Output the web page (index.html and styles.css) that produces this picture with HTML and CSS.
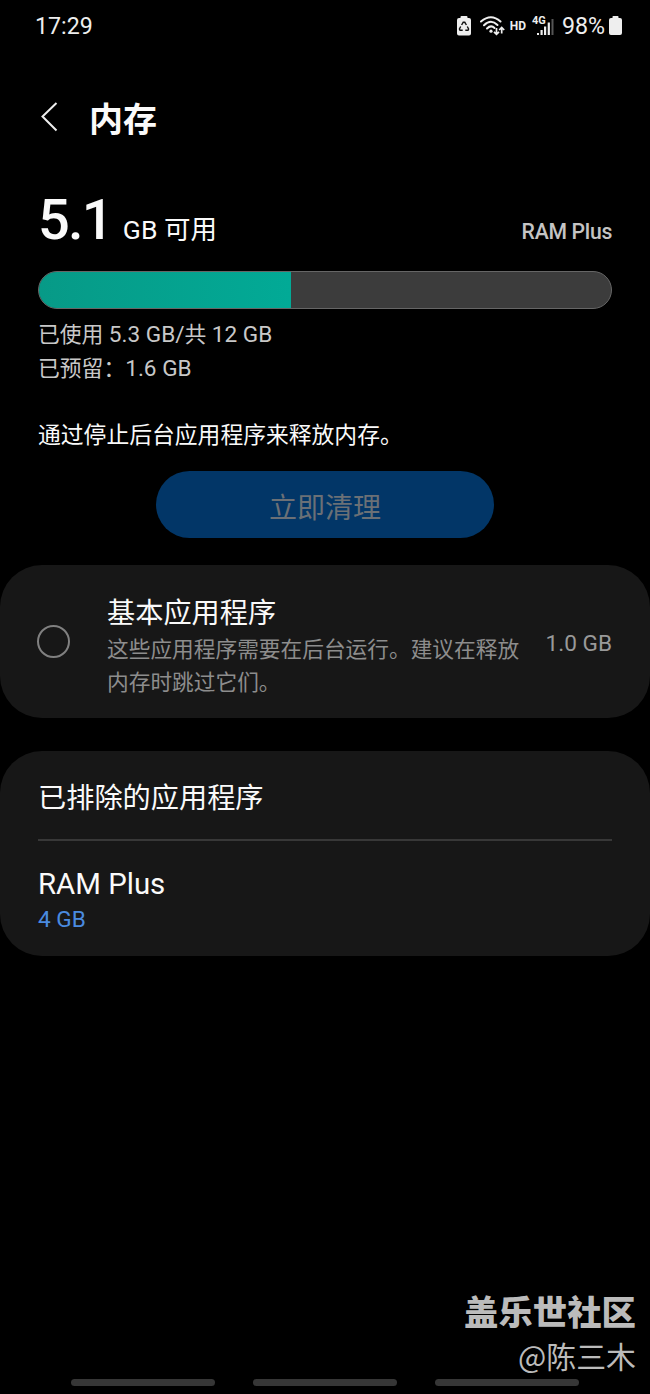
FILE: index.html
```html
<!DOCTYPE html>
<html lang="zh-CN">
<head>
  <meta charset="UTF-8" />
  <meta name="viewport" content="width=device-width, initial-scale=1.0"/>
  <title>内存</title>
  <link rel="stylesheet" href="styles.css">
</head>
<body>
  <div class="status-bar">
    <span class="time">17:29</span>
    <div class="status-icons">
      <svg class="icon-saver" width="14" height="20" viewBox="0 0 14 20">
        <path d="M3.500 2V1Q3.500 0 4.500 0H9.500Q10.500 0 10.500 1V2H12Q14 2 14 4V17.500Q14 19.500 12 19.500H2Q0 19.500 0 17.500V4Q0 2 2 2Z" fill="#eee"/>
        <path d="M4.600 9L6.200 6.300H7.800L9.400 9M10.300 10.500L11.600 13L11 14.200H8.300M5.700 14.200H3L2.400 13L3.700 10.500" fill="none" stroke="#111" stroke-width="1.400"/>
      </svg>
      <svg class="icon-wifi" width="26" height="20" viewBox="0 0 26 20">
        <g fill="none" stroke="#eee" stroke-width="2" stroke-linecap="round">
          <path d="M1 5.500Q11 -3 20.500 5.500"/>
          <path d="M4 9.200Q11 2.500 17.500 9"/>
          <path d="M7 12.500Q11 8.500 14.500 12"/>
        </g>
        <circle cx="11" cy="15.200" r="1.600" fill="#eee"/>
        <path d="M16.500 12V18.300M14 15.800L16.500 18.300L19 15.800M21.700 17.500V11.500M19.200 14L21.700 11.500L24.200 14" fill="none" stroke="#eee" stroke-width="1.700"/>
      </svg>
      <span class="hd">HD</span>
      <div class="signal">
        <svg width="24" height="20" viewBox="0 0 24 20">
          <path d="M5 17h2v2h-2zM8.500 14h2.200v5h-2.200zM12 10.500h2.200v8.500h-2.200zM15.700 6.500h2.200v12.500h-2.200z" fill="#eee"/>
          <path d="M19.500 3h2v16h-2z" fill="#555"/>
        </svg>
        <span class="net">4G</span>
      </div>
      <span class="percent">98%</span>
      <svg class="icon-battery" width="13" height="20" viewBox="0 0 13 20">
        <path d="M3.500 2V.8Q3.500 0 4.300 0H8.700Q9.500 0 9.500 .8V2H11Q13 2 13 4V17Q13 19 11 19H2Q0 19 0 17V4Q0 2 2 2Z" fill="#eee"/>
      </svg>
    </div>
  </div>

  <header class="header">
    <svg class="back" width="18" height="32" viewBox="0 0 18 32">
      <path d="M16.500 2L2.500 15.500L16.500 29.500" fill="none" stroke="#eee" stroke-width="2"/>
    </svg>
    <h1>内存</h1>
  </header>

  <section class="memory">
    <div class="summary">
      <div class="free"><span class="num">5.1</span><span class="unit">GB 可用</span></div>
      <span class="ram-label">RAM Plus</span>
    </div>
    <div class="bar"><div class="used" style="width: 44%"></div></div>
    <p class="detail">已使用 <span>5.3 GB/</span>共 <span>12 GB</span></p>
    <p class="detail">已预留：<span>1.6 GB</span></p>
    <p class="hint">通过停止后台应用程序来释放内存。</p>
    <button class="clean" disabled>立即清理</button>
  </section>

  <section class="card basic">
    <span class="radio"></span>
    <div class="basic-text">
      <h2>基本应用程序</h2>
      <p>这些应用程序需要在后台运行。建议在释放内存时跳过它们。</p>
    </div>
    <span class="size">1.0 GB</span>
  </section>

  <section class="card options">
    <h2 class="excluded">已排除的应用程序</h2>
    <div class="ram-plus">
      <h2>RAM Plus</h2>
      <p>4 GB</p>
    </div>
  </section>

  <nav class="gestures">
    <span></span>
    <span></span>
    <span></span>
  </nav>

  <div class="watermark">
    <strong>盖乐世社区</strong>
    <span>@陈三木</span>
  </div>
</body>
</html>
```
FILE: styles.css
```css
* { box-sizing: border-box; }
body { margin: 0; height: 1394px; display: flex; flex-direction: column; position: relative; overflow: hidden; background: #000; color: #fafafa; font-family: Roboto, "Noto Sans CJK SC", sans-serif; }
h1, h2, p { margin: 0; font-weight: 400; white-space: nowrap; }
svg { display: block; }

.status-bar { height: 52px; padding: 0 28px 0 35px; display: flex; align-items: center; justify-content: space-between; color: #eee; }
.time { font-size: 23.2px; line-height: 28px; }
.status-icons { display: flex; align-items: center; }
.icon-wifi { margin-left: 9px; }
.hd { margin-left: 4px; font-size: 12px; font-weight: 700; }
.signal { position: relative; margin-left: 6px; }
.net { position: absolute; left: 0; top: -1px; font-size: 11px; line-height: 12px; font-weight: 700; }
.percent { margin-left: 6px; font-size: 23.2px; line-height: 28px; }
.icon-battery { margin-left: 4px; }

.header { height: 130px; padding: 0 40px; display: flex; align-items: center; gap: 31px; }
.header h1 { padding-top: 6px; font-size: 34px; line-height: 48px; font-weight: 700; }

.memory { height: 383px; padding: 0 38px; display: flex; flex-direction: column; }
.summary { height: 89px; display: flex; justify-content: space-between; align-items: baseline; }
.num { font-size: 56px; line-height: 76px; font-weight: 500; letter-spacing: -1.8px; }
.unit { margin-left: 11px; font-size: 26.5px; }
.ram-label { font-size: 21.2px; font-weight: 500; letter-spacing: -0.3px; color: #c4c4c4; }
.bar { flex: none; height: 38px; border: 1px solid #666; border-radius: 19px; background: #3c3c3c; overflow: hidden; }
.used { height: 100%; background: linear-gradient(90deg, #079a87, #02aa96); }
.detail { font-size: 21.8px; line-height: 34px; color: #c8c8c8; }
.detail span { font-size: 22.6px; }
.bar + .detail { margin-top: 9px; }
.hint { margin-top: 33px; font-size: 22.8px; line-height: 34px; }
.clean { align-self: center; margin-top: 18px; width: 338px; height: 67px; padding-top: 3px; flex: none; border: 0; border-radius: 34px; background: #023667; color: #6b7076; font: inherit; font-size: 28px; }

.card { background: #171717; border-radius: 42px; padding: 0 38px; }
.basic { height: 153px; display: flex; align-items: center; }
.radio { width: 33px; height: 33px; margin-left: -1px; flex: none; border: 2px solid #808080; border-radius: 50%; }
.basic-text { margin-left: 37px; padding-top: 10px; width: 415px; }
.card h2 { font-size: 28.2px; line-height: 38px; }
.basic-text p { font-size: 21.7px; line-height: 33px; color: #8d8d8d; white-space: normal; }
.size { margin-left: auto; padding-top: 3px; font-size: 22.6px; color: #999; }

.options { height: 205px; margin-top: 33px; }
.options .excluded { height: 90px; padding-top: 3px; line-height: 90px; border-bottom: 2px solid #383838; }
.ram-plus { padding-top: 24px; }
.ram-plus h2 { font-size: 29.4px; }
.ram-plus p { font-size: 22.6px; line-height: 34px; color: #4a8be0; }

.gestures { margin-top: auto; height: 15px; padding: 0 71px; display: flex; justify-content: space-between; }
.gestures span { width: 144px; height: 7px; border-radius: 4px; background: #363636; }

.watermark { position: absolute; right: 14px; bottom: 17px; display: flex; flex-direction: column; align-items: flex-end; color: #bbb; font-family: "Noto Sans CJK SC", sans-serif; }
.watermark strong { font-size: 34.4px; line-height: 45px; font-weight: 900; }
.watermark span { font-size: 29.9px; line-height: 44px; }
```
